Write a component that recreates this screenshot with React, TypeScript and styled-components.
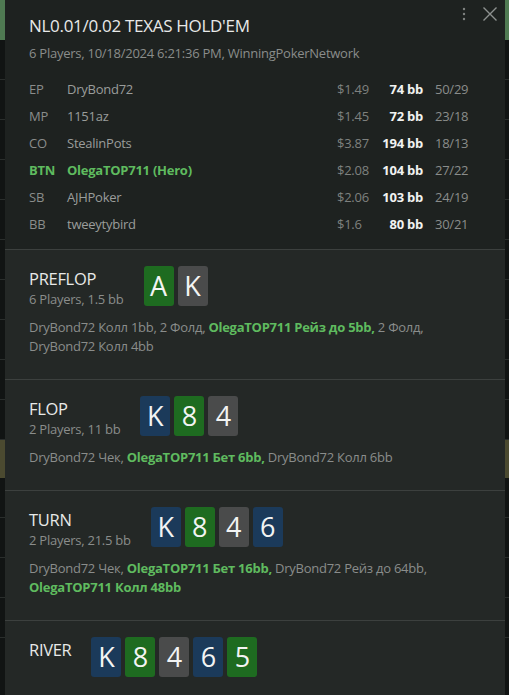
import React from "react";
import styled, { createGlobalStyle } from "styled-components";

const Global = createGlobalStyle`
  html, body { margin: 0; padding: 0; background: #111413; }
  body { width: 509px; height: 695px; overflow: hidden; font-family: "Open Sans", "Noto Sans", sans-serif; letter-spacing: -0.25px; }
`;

const Page = styled.div`
  position: relative;
  width: 509px;
  height: 695px;
  overflow: hidden;
  background: #111413;
  display: flex;
  flex-direction: column;
`;

const BackBand = styled.div<{ $h: number; $c: string }>`
  height: ${(p) => p.$h}px;
  background: ${(p) => p.$c};
`;

const BackRow = styled.div`
  height: 39px;
  border-bottom: 1px solid #2a2e2c;
`;

const Dialog = styled.div`
  position: absolute;
  left: 5px;
  top: 0;
  width: 500px;
  height: 720px;
  background: #242826;
  display: flex;
  flex-direction: column;
  color: #e6e7e6;
`;

const Header = styled.div`
  position: relative;
  background: #1e2220;
  padding: 14px 24px 12px 24px;
`;

const TopIcons = styled.div`
  position: absolute;
  top: 6px;
  right: 7px;
  display: flex;
  align-items: center;
  gap: 16px;
`;

const Title = styled.div`
  font-size: 17px;
  line-height: 24px;
  letter-spacing: -0.3px;
  color: #e8e9e8;
`;

const Sub = styled.div`
  margin-top: 5px;
  font-size: 13px;
  line-height: 20px;
  color: #8a8d8b;
`;

const Table = styled.div`
  margin-top: 12px;
  display: grid;
  grid-template-columns: 38px 1fr 44px 42px 58px;
  grid-auto-rows: 27px;
  align-items: center;
  font-size: 13px;
`;

const Cell = styled.div<{ $hero?: boolean; $tone?: "pos" | "name" | "money" | "bb" | "stat" }>`
  white-space: nowrap;
  color: ${(p) =>
    p.$hero && (p.$tone === "pos" || p.$tone === "name")
      ? "#5fbb5f"
      : p.$tone === "bb"
      ? "#f1f2f1"
      : p.$tone === "money"
      ? "#7e817f"
      : p.$tone === "name"
      ? "#9a9d9b"
      : "#8a8d8b"};
  font-weight: ${(p) => (p.$tone === "bb" || (p.$hero && p.$tone !== "money" && p.$tone !== "stat") ? 700 : 400)};
  text-align: ${(p) => (p.$tone === "bb" ? "right" : "left")};
  padding-left: ${(p) => (p.$tone === "stat" ? 12 : 0)}px;
`;

const Section = styled.div`
  border-top: 1px solid #3c403e;
  padding: 16px 24px 23px 24px;
`;

const Head = styled.div`
  display: flex;
  align-items: flex-start;
  gap: 20px;
`;

const StreetBlock = styled.div`
  margin-top: 2px;
  display: flex;
  flex-direction: column;
`;

const Street = styled.div`
  font-size: 16.5px;
  line-height: 22px;
  letter-spacing: -0.3px;
  color: #e8e9e8;
`;

const StreetSub = styled.div`
  font-size: 13px;
  line-height: 18px;
  color: #8a8d8b;
`;

const Cards = styled.div`
  display: flex;
  gap: 4px;
`;

const suitColors: Record<string, string> = {
  g: "#1e6b20",
  k: "#4a4b4b",
  b: "#1b3a5a",
};

const Card = styled.div<{ $s: string }>`
  width: 30px;
  height: 40px;
  border-radius: 3px;
  background: ${(p) => suitColors[p.$s]};
  color: #f3f4f3;
  font-size: 27px;
  line-height: 40px;
  letter-spacing: 0;
  text-align: center;
`;

const Actions = styled.div`
  margin-top: 10px;
  font-size: 13px;
  line-height: 19px;
  color: #8a8d8b;
`;

const Hero = styled.span`
  color: #5fbb5f;
  font-weight: 700;
`;

const players = [
  ["EP", "DryBond72", "$1.49", "74 bb", "50/29"],
  ["MP", "1151az", "$1.45", "72 bb", "23/18"],
  ["CO", "StealinPots", "$3.87", "194 bb", "18/13"],
  ["BTN", "OlegaTOP711 (Hero)", "$2.08", "104 bb", "27/22"],
  ["SB", "AJHPoker", "$2.06", "103 bb", "24/19"],
  ["BB", "tweeytybird", "$1.6", "80 bb", "30/21"],
];

type Part = [string, boolean];
const streets: { name: string; sub?: string; cards: [string, string][]; actions?: Part[] }[] = [
  {
    name: "PREFLOP",
    sub: "6 Players, 1.5 bb",
    cards: [["A", "g"], ["K", "k"]],
    actions: [
      ["DryBond72 Колл 1bb, 2 Фолд, ", false],
      ["OlegaTOP711 Рейз до 5bb,", true],
      [" 2 Фолд, DryBond72 Колл 4bb", false],
    ],
  },
  {
    name: "FLOP",
    sub: "2 Players, 11 bb",
    cards: [["K", "b"], ["8", "g"], ["4", "k"]],
    actions: [
      ["DryBond72 Чек, ", false],
      ["OlegaTOP711 Бет 6bb,", true],
      [" DryBond72 Колл 6bb", false],
    ],
  },
  {
    name: "TURN",
    sub: "2 Players, 21.5 bb",
    cards: [["K", "b"], ["8", "g"], ["4", "k"], ["6", "b"]],
    actions: [
      ["DryBond72 Чек, ", false],
      ["OlegaTOP711 Бет 16bb,", true],
      [" DryBond72 Рейз до 64bb, ", false],
      ["OlegaTOP711 Колл 48bb", true],
    ],
  },
  {
    name: "RIVER",
    cards: [["K", "b"], ["8", "g"], ["4", "k"], ["6", "b"], ["5", "g"]],
  },
];

export default function App() {
  return (
    <Page>
      <Global />
      <BackBand $h={40} $c="#4f7a52" />
      <BackRow />
      <BackRow />
      <BackRow />
      <BackRow />
      <BackRow />
      <BackRow />
      <BackRow />
      <BackRow />
      <BackRow />
      <BackRow />
      <BackBand $h={38} $c="#4b4a30" />
      <BackRow />
      <BackRow />
      <BackRow />
      <BackRow />
      <Dialog>
        <Header>
          <TopIcons>
            <svg width="4" height="14" viewBox="0 0 4 14">
              <circle cx="2" cy="2" r="1.2" fill="#7f8381" />
              <circle cx="2" cy="7" r="1.2" fill="#7f8381" />
              <circle cx="2" cy="12" r="1.2" fill="#7f8381" />
            </svg>
            <svg width="16" height="16" viewBox="0 0 16 16">
              <path d="M1.5 1.5 L14.5 14.5 M14.5 1.5 L1.5 14.5" stroke="#8d918f" strokeWidth="1.4" />
            </svg>
          </TopIcons>
          <Title>NL0.01/0.02 TEXAS HOLD'EM</Title>
          <Sub>6 Players, 10/18/2024 6:21:36 PM, WinningPokerNetwork</Sub>
          <Table>
            {players.map((p) => {
              const hero = p[0] === "BTN";
              return (
                <React.Fragment key={p[0]}>
                  <Cell $tone="pos" $hero={hero}>{p[0]}</Cell>
                  <Cell $tone="name" $hero={hero}>{p[1]}</Cell>
                  <Cell $tone="money">{p[2]}</Cell>
                  <Cell $tone="bb">{p[3]}</Cell>
                  <Cell $tone="stat">{p[4]}</Cell>
                </React.Fragment>
              );
            })}
          </Table>
        </Header>
        {streets.map((s) => (
          <Section key={s.name}>
            <Head>
              <StreetBlock>
                <Street>{s.name}</Street>
                {s.sub && <StreetSub>{s.sub}</StreetSub>}
              </StreetBlock>
              <Cards>
                {s.cards.map(([r, c], i) => (
                  <Card key={i} $s={c}>{r}</Card>
                ))}
              </Cards>
            </Head>
            {s.actions && (
              <Actions>
                {s.actions.map(([t, h], i) => (h ? <Hero key={i}>{t}</Hero> : <span key={i}>{t}</span>))}
              </Actions>
            )}
          </Section>
        ))}
      </Dialog>
    </Page>
  );
}
